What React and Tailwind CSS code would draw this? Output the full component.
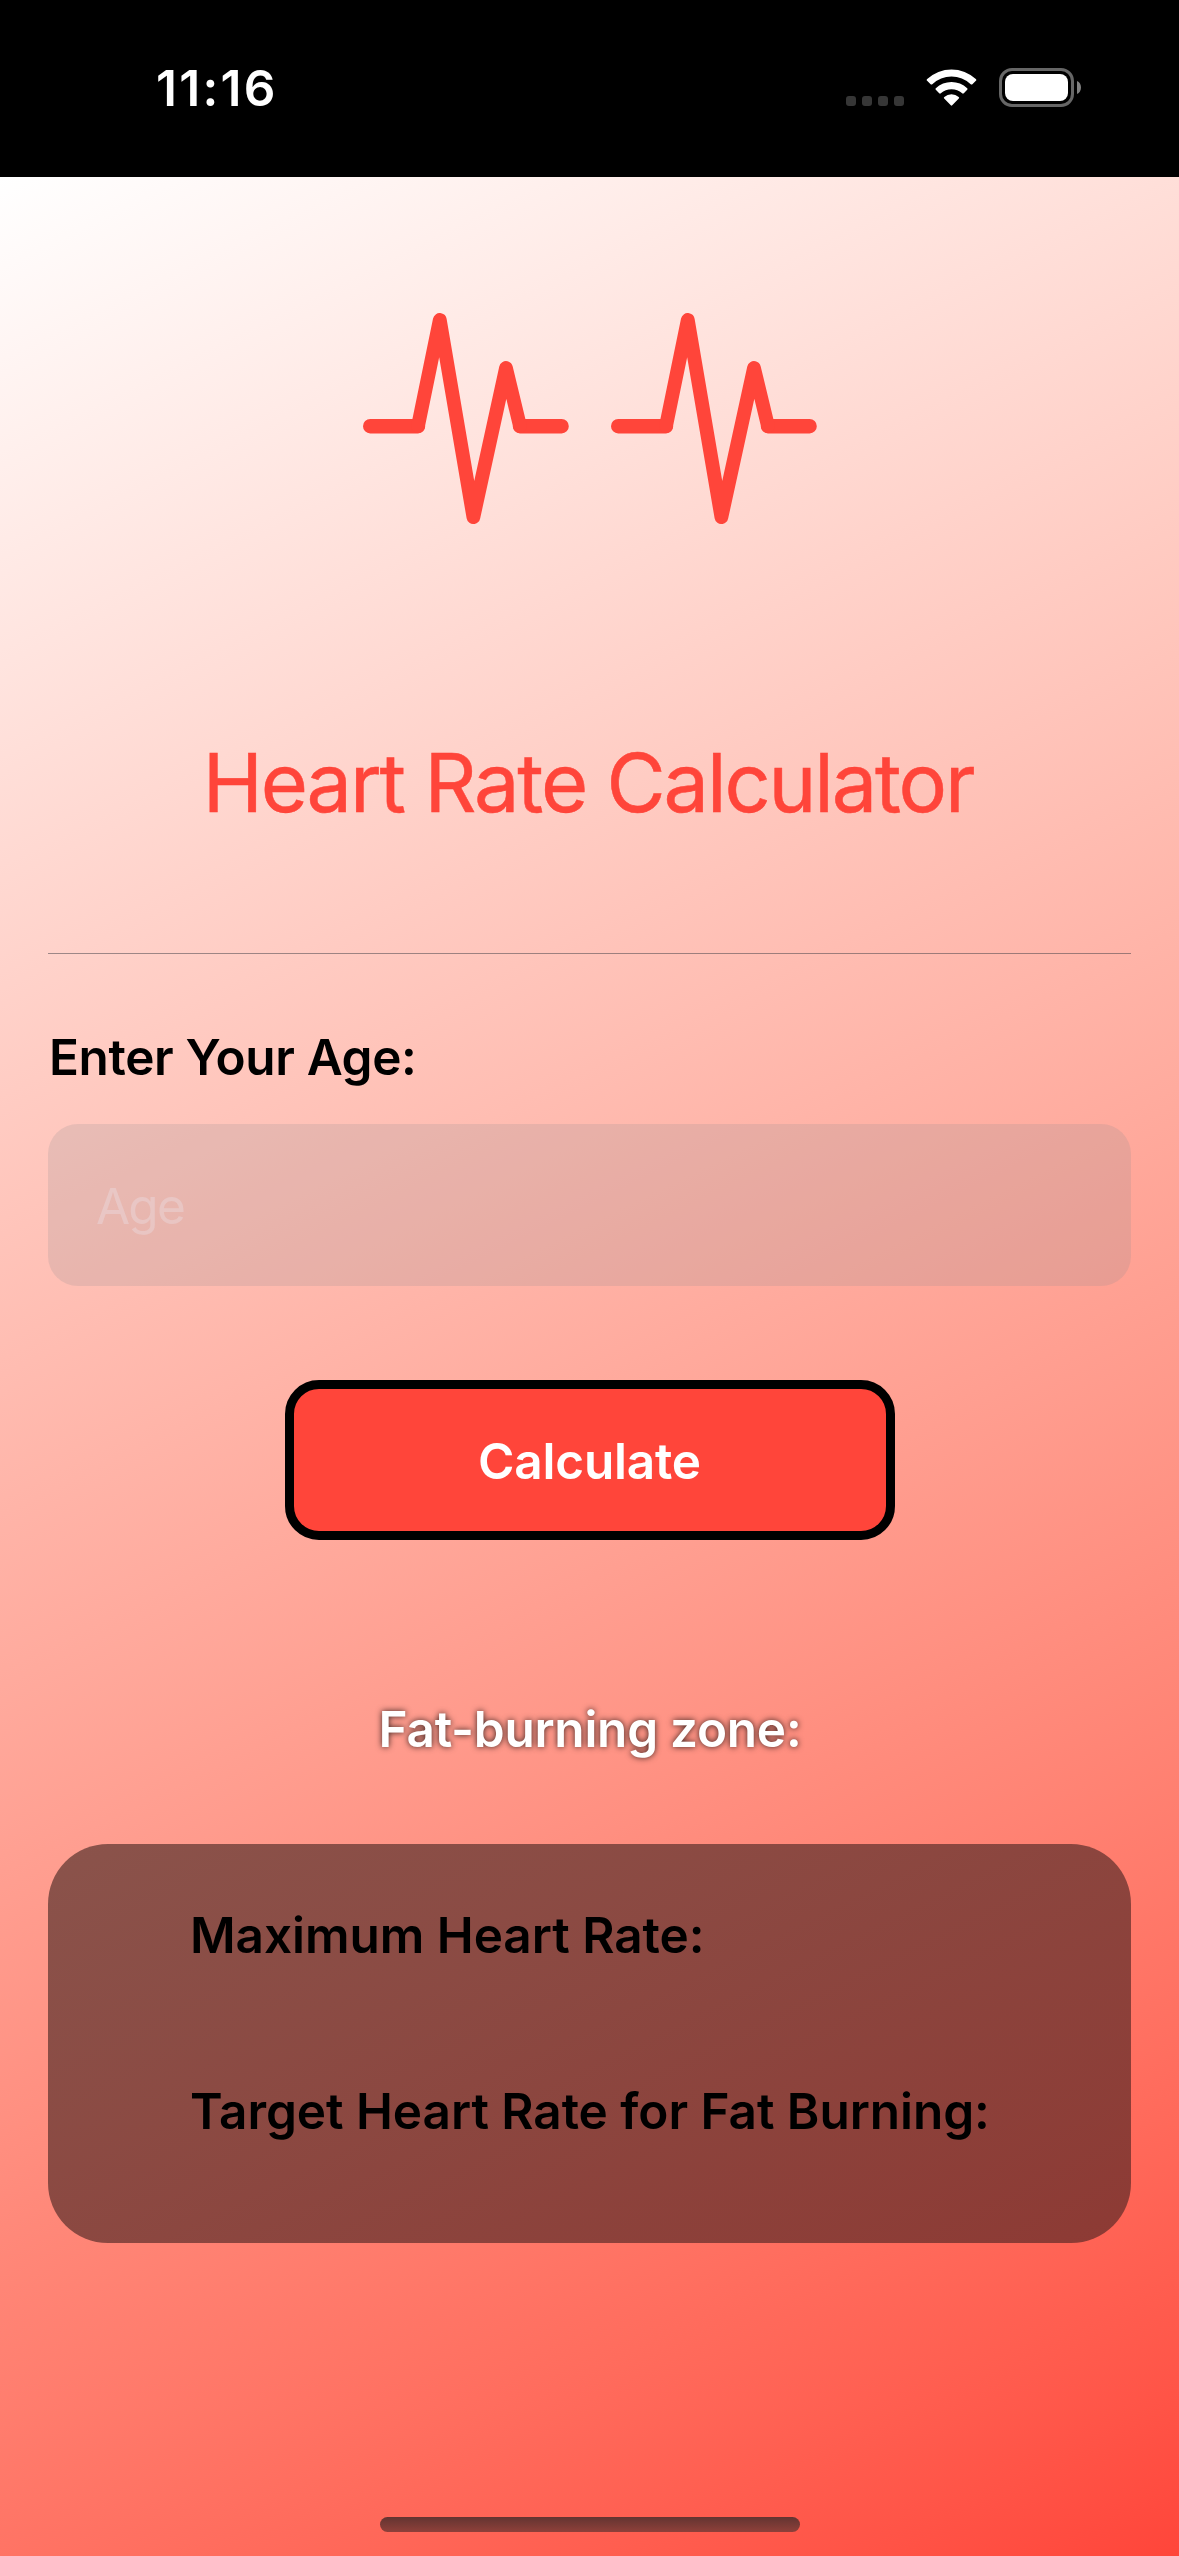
function PulseIcon() {
  return (
    <svg
      className="h-[211px] w-[206px] text-[#ff453a]"
      viewBox="0 0 206 211"
      fill="none"
      stroke="currentColor"
      strokeLinecap="round"
      strokeLinejoin="round"
    >
      <path d="M7.2 113.2H55M157 113.2H198.6" strokeWidth="14.4" />
      <path d="M55 113.2L76.8 6.9L110.4 204.1L143 55L157 113.2" strokeWidth="13.8" />
    </svg>
  );
}

function StatusBar() {
  return (
    <header className="flex h-[177px] items-start bg-black pl-[156px] pr-[98px] pt-[58px] text-white">
      <span className="text-[49.5px] font-semibold leading-[60px] tracking-[2.3px]">11:16</span>
      <div className="ml-auto mt-[38px] flex gap-1.5">
        {[0, 1, 2, 3].map((dot) => (
          <span key={dot} className="size-2.5 rounded-[3px] bg-[#363636]" />
        ))}
      </div>
      <svg className="ml-[22px] mt-[11px] h-[37px] w-[51px]" viewBox="0 0 51 37" fill="currentColor">
        <path d="M1.2 10.1A35.5 35.5 0 0 1 49.8 10.1Q50.8 11 49.9 11.8L46.4 15.2Q45.6 16 44.7 15.2A28 28 0 0 0 6.3 15.2Q5.4 16 4.6 15.2L1.1 11.8Q.2 11 1.2 10.1Z" />
        <path d="M9.8 19.2A23 23 0 0 1 41.2 19.2Q42 20 41.2 20.8L37.8 24.2Q37 25 36.2 24.3A16.5 16.5 0 0 0 14.8 24.3Q14 25 13.2 24.2L9.8 20.8Q9 20 9.8 19.2Z" />
        <path d="M18.3 28A11 11 0 0 1 32.7 28Q33.6 28.8 32.8 29.6L26.2 36.3Q25.5 37 24.8 36.3L18.2 29.6Q17.4 28.8 18.3 28Z" />
      </svg>
      <svg className="ml-[22px] mt-[10px] h-[39px] w-[82px]" viewBox="0 0 82 39">
        <rect x="1.5" y="1.5" width="72" height="36" rx="11.5" fill="none" stroke="#666" strokeWidth="3" />
        <rect x="6" y="6" width="63" height="27" rx="8" fill="#fff" />
        <path d="M78 13C80.600 14.200 82 16.600 82 19.500S80.600 24.800 78 26Z" fill="#808080" />
      </svg>
    </header>
  );
}

export default function App() {
  return (
    <div className="flex h-[2556px] w-[1179px] flex-col overflow-hidden font-['Inter',sans-serif] text-black">
      <StatusBar />
      <main className="flex flex-1 flex-col items-center bg-[linear-gradient(153.64deg_in_oklab,#ffffff,#ff453a)] px-12">
        <div className="mt-[136px] flex gap-[42px]">
          <PulseIcon />
          <PulseIcon />
        </div>
        <h1 className="mt-[211px] whitespace-nowrap pr-[3px] text-[81px] leading-[96px] tracking-[-2.16px] text-[#ff453a] [-webkit-text-stroke:0.5px_#ff453a]">
          Heart Rate Calculator
        </h1>
        <hr className="mt-[122px] h-px w-full border-0 bg-[#3c3c43]/50" />
        <label className="mt-[73px] w-full pl-px text-[49.5px] font-semibold leading-[60px] tracking-[-0.36px]">
          Enter Your Age:
        </label>
        <div className="mt-[37px] flex h-[162px] w-full items-center rounded-[30px] bg-[#8e8e93]/20 pl-12 pt-0.5 text-[49.5px] tracking-[-1.8px] text-[#ebebf5]/30">
          Age
        </div>
        <button className="mt-[94px] flex h-[160px] w-[610px] items-center justify-center rounded-[34px] border-[9px] border-black bg-[#ff453a] pt-0.5 text-[49.5px] font-semibold tracking-[-0.2px] text-white">
          Calculate
        </button>
        <h2 className="mt-[159px] whitespace-nowrap pl-px text-[49.5px] font-semibold leading-[60px] tracking-[-0.25px] text-white [text-shadow:0_0_6px_rgba(0,0,0,0.8)]">
          Fat-burning zone:
        </h2>
        <section className="mt-[85px] flex h-[399px] w-full flex-col gap-[116px] rounded-[60px] bg-[linear-gradient(153.64deg,#8a534b,#8d3a34)] pl-[142px] pt-[61px] text-[49.5px] font-semibold leading-[60px]">
          <p className="tracking-[-0.04px]">Maximum Heart Rate:</p>
          <p className="whitespace-nowrap tracking-[-0.04px]">Target Heart Rate for Fat Burning:</p>
        </section>
        <div className="mt-[274px] h-[15px] w-[420px] rounded-full bg-linear-to-b from-[#633431] to-[#8f403a]" />
      </main>
    </div>
  );
}
